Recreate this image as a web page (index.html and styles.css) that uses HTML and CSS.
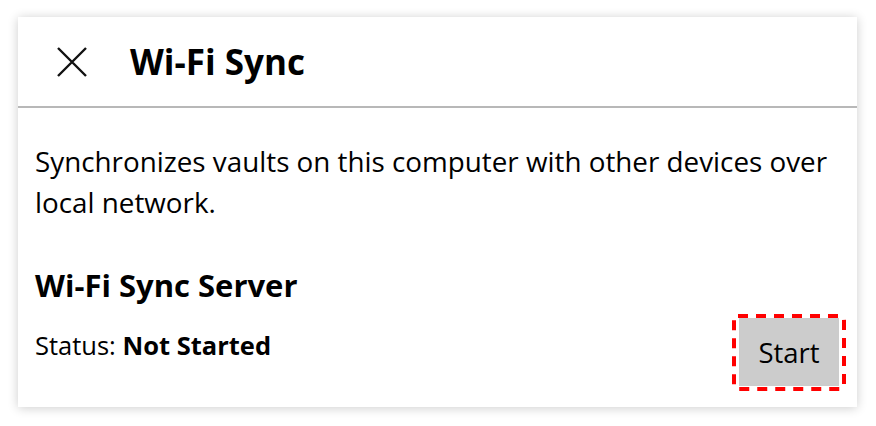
FILE: index.html
```html
<!DOCTYPE html>
<html lang="en">
<head>
<meta charset="utf-8">
<title>Wi-Fi Sync</title>
<link rel="stylesheet" href="styles.css">
</head>
<body>
<div class="card">
  <header class="card-header">
    <button class="close" aria-label="Close">
      <svg width="30" height="30" viewBox="0 0 30 30"><path d="M1 1 L29 29 M29 1 L1 29" stroke="#111" stroke-width="2.4" fill="none"/></svg>
    </button>
    <h1 class="title">Wi-Fi Sync</h1>
  </header>
  <div class="card-body">
    <p class="desc">Synchronizes vaults on this computer with other devices over local network.</p>
    <h2 class="section-title">Wi-Fi Sync Server</h2>
    <div class="status-row">
      <div class="status">Status: <strong>Not Started</strong></div>
      <div class="btn-focus">
        <button class="btn">Start</button>
        <svg class="focus-ring" width="114" height="77" viewBox="0 0 114 77"><rect x="2" y="2" width="110" height="73" rx="4" ry="4" fill="none" stroke="#ff0000" stroke-width="4" stroke-dasharray="10 8"/></svg>
      </div>
    </div>
  </div>
</div>
</body>
</html>
```

FILE: styles.css
```css
html, body {
  margin: 0;
  padding: 0;
  background: #fff;
}
body {
  padding: 17px 0 19px 18px;
  font-family: "Open Sans", "Noto Sans", sans-serif;
  color: #000;
}
.card {
  width: 839px;
  height: 390px;
  background: #fff;
  box-shadow: 0 1px 10px rgba(0, 0, 0, 0.2);
  display: flex;
  flex-direction: column;
}
.card-header {
  height: 89px;
  border-bottom: 2px solid #b8b8b8;
  display: flex;
  align-items: center;
  padding-left: 39px;
  box-sizing: content-box;
  flex: none;
}
.close {
  border: 0;
  background: none;
  padding: 0;
  width: 30px;
  height: 30px;
  display: block;
}
.close svg { display: block; }
.title {
  margin: 0 0 0 43px;
  font-size: 35px;
  font-weight: 700;
  line-height: 48px;
}
.card-body {
  flex: 1;
  padding: 33px 11px 0 17px;
  display: flex;
  flex-direction: column;
}
.desc {
  margin: 0;
  font-size: 27.8px;
  line-height: 41px;
}
.section-title {
  margin: 42px 0 0;
  font-size: 31px;
  font-weight: 700;
  line-height: 40px;
}
.status-row {
  display: flex;
  justify-content: space-between;
  align-items: flex-start;
  margin-top: 9px;
}
.status {
  font-size: 25.5px;
  line-height: 34px;
  margin-top: 14px;
}
.status strong { font-weight: 700; }
.btn-focus {
  position: relative;
  padding: 4px 7px 5px;
}
.focus-ring {
  position: absolute;
  left: 0;
  top: 0;
  pointer-events: none;
}
.btn {
  display: block;
  width: 100px;
  height: 68px;
  background: #cccccc;
  border: 0;
  font-family: inherit;
  font-size: 27.5px;
  color: #000;
  padding: 0;
}
```
